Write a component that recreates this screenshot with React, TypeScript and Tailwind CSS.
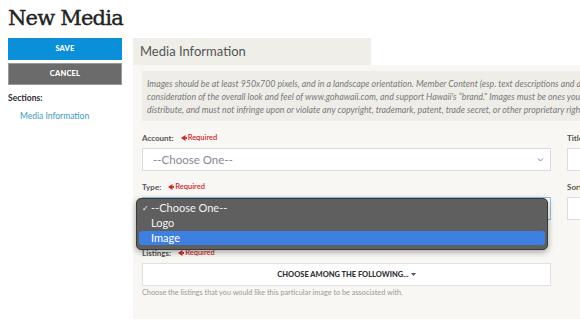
import React from "react";

function RequiredTag() {
  return (
    <span className="ml-[7px] inline-flex items-center text-[7.5px] font-semibold text-[#c8262b]">
      <svg width="6" height="6" viewBox="0 0 6 6" className="mr-[1px]">
        <path d="M0 3 L4.5 0 L4.5 6 Z" fill="#c8262b" />
        <rect x="4.5" y="2" width="1.5" height="2" fill="#c8262b" />
      </svg>
      Required
    </span>
  );
}

function FieldLabel({ text, required }: { text: string; required?: boolean }) {
  return (
    <div className="flex h-[10px] items-center text-[8px] font-bold leading-[10px] text-[#555]">
      {text}
      {required && <RequiredTag />}
    </div>
  );
}

function Chevron() {
  return (
    <svg width="7" height="5" viewBox="0 0 7 5" className="absolute right-[6px] top-1/2 -translate-y-1/2">
      <polyline points="1,1 3.5,3.5 6,1" fill="none" stroke="#888" strokeWidth="1" />
    </svg>
  );
}

export default function App() {
  return (
    <div className="relative h-[329px] w-[580px] overflow-hidden bg-white font-['Lato',sans-serif]">
      <h1 className="h-[38px] pl-2 font-['DejaVu_Serif',serif] text-[21px] leading-[36px] tracking-[-0.8px] text-[#222] [-webkit-text-stroke:0.4px_#222]">
        New Media
      </h1>

      <div className="flex gap-[11px] pl-2">
        <aside className="w-[114px] shrink-0">
          <button className="flex h-[22px] w-full items-center justify-center bg-[#0b8fd8] text-[7.5px] font-black uppercase tracking-wide text-white">
            Save
          </button>
          <button className="mt-[3px] flex h-[22px] w-full items-center justify-center border border-[#999] bg-[#6b6b6b] text-[7.5px] font-black uppercase tracking-wide text-white">
            Cancel
          </button>
          <p className="mt-[7px] text-[8.5px] font-bold text-[#2b2b33]">Sections:</p>
          <a className="ml-3 mt-[5px] block text-[8.5px] text-[#3a9cc0]">Media Information</a>
        </aside>

        <section className="w-[480px] shrink-0">
          <div className="flex h-[27px] w-[238px] items-center bg-[#efeee9] pl-[7px] pt-[1px] text-[13px] text-[#555]">
            Media Information
          </div>
          <div className="h-[254px] bg-[#f8f7f3] pl-[9px] pt-[6px]">
            <div className="h-[50px] bg-[#eeede8] pl-[5px] pt-[6px] text-[8.8px] italic leading-[13px] text-[#7a7a7a]">
              <p className="whitespace-nowrap">
                Images should be at least 950x700 pixels, and in a landscape orientation. Member Content (esp. text descriptions and any images)
              </p>
              <p className="whitespace-nowrap">
                consideration of the overall look and feel of www.gohawaii.com, and support Hawaii&apos;s &ldquo;brand.&rdquo; Images must be ones you own
              </p>
              <p className="whitespace-nowrap">
                distribute, and must not infringe upon or violate any copyright, trademark, patent, trade secret, or other proprietary rights
              </p>
            </div>

            <div className="mt-[12px] flex gap-4">
              <div className="w-[409px] shrink-0">
                <FieldLabel text="Account:" required />
                <div className="relative mt-[5px] flex h-[23px] items-center border border-[#dcdcdc] bg-white pl-[10px] text-[11.5px] text-[#888]">
                  --Choose One--
                  <Chevron />
                </div>

                <div className="mt-[11px]">
                  <FieldLabel text="Type:" required />
                </div>
                <div className="relative mt-[5px] h-[23px] border border-[#8cc3ec] bg-white">
                  <Chevron />
                  <div className="absolute left-[-7px] top-[0px] z-10 h-[52px] w-[412px] rounded-[5px] border border-[#3a3a3a] bg-[#5f5f5f] px-[2px] pt-[1px] text-[11px] text-[#f2f2f2] shadow-[0_2px_6px_rgba(0,0,0,0.35)]">
                    <div className="flex h-[16px] items-center">
                      <span className="w-[12px] pl-[3px] text-[8px]">✓</span>
                      <span>--Choose One--</span>
                    </div>
                    <div className="flex h-[15px] items-center pl-[12px]">Logo</div>
                    <div className="flex h-[14px] items-center rounded-[3px] bg-[#3d80e2] pl-[12px] text-white">Image</div>
                  </div>
                </div>

                <div className="mt-[28px]">
                  <FieldLabel text="Listings:" required />
                </div>
                <div className="mt-[5px] flex h-[23px] items-center justify-center border border-[#e0e0e0] bg-white text-[7.5px] font-black text-[#333]">
                  CHOOSE AMONG THE FOLLOWING...
                  <svg width="5" height="3" viewBox="0 0 5 3" className="ml-[2px]">
                    <path d="M0 0 L5 0 L2.5 3 Z" fill="#555" />
                  </svg>
                </div>
                <p className="mt-[2px] text-[7.3px] text-[#999]">
                  Choose the listings that you would like this particular image to be associated with.
                </p>
              </div>

              <div className="w-[60px] shrink-0">
                <FieldLabel text="Title" />
                <div className="mt-[5px] h-[23px] border border-[#dcdcdc] bg-white" />
                <div className="mt-[11px]">
                  <FieldLabel text="Sort" />
                </div>
                <div className="mt-[5px] h-[23px] border border-[#dcdcdc] bg-white" />
              </div>
            </div>
          </div>
        </section>
      </div>
    </div>
  );
}
